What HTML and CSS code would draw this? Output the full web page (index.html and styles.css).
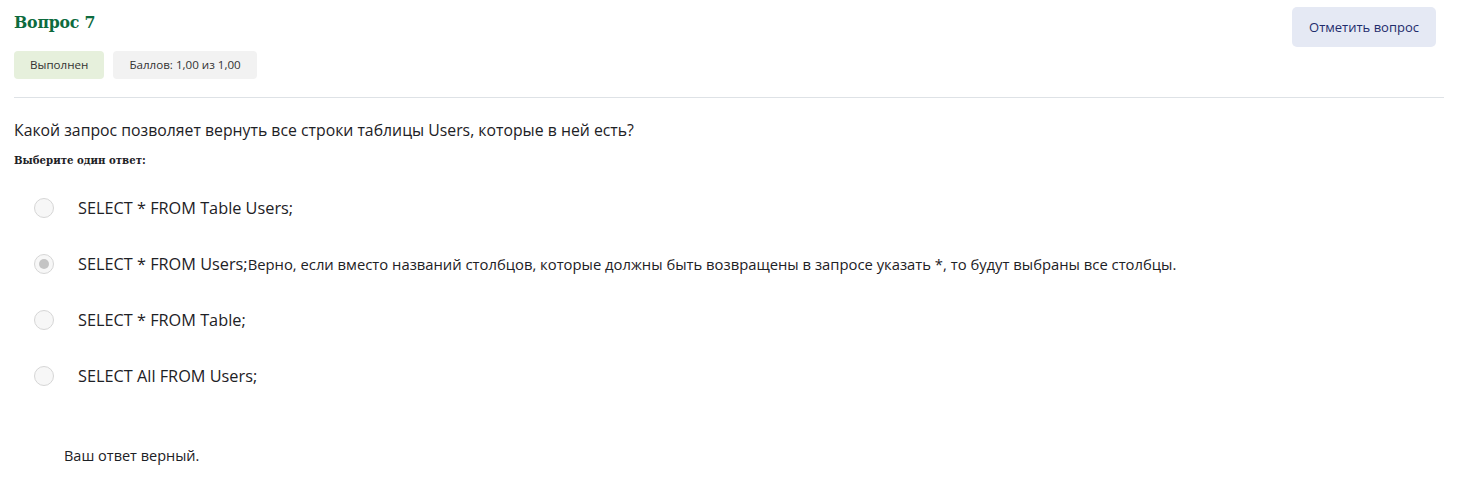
FILE: index.html
```html
<!DOCTYPE html>
<html lang="ru">
<head>
<meta charset="utf-8">
<link rel="stylesheet" href="styles.css">
</head>
<body>
<div class="que">
  <div class="info">
    <div class="info-left">
      <h3 class="qno">Вопрос 7</h3>
      <div class="badges">
        <span class="badge badge-done">Выполнен</span>
        <span class="badge badge-grade">Баллов: 1,00 из 1,00</span>
      </div>
    </div>
    <button class="flag">Отметить вопрос</button>
  </div>
  <div class="content">
    <div class="qtext">Какой запрос позволяет вернуть все строки таблицы Users, которые в ней есть?</div>
    <div class="prompt">Выберите один ответ:</div>
    <div class="answers">
      <div class="answer"><span class="radio"></span><span class="label">SELECT * FROM Table Users;</span></div>
      <div class="answer"><span class="radio checked"></span><span class="label">SELECT * FROM Users;<span class="fb">Верно, если вместо названий столбцов, которые должны быть возвращены в запросе указать *, то будут выбраны все столбцы.</span></span></div>
      <div class="answer"><span class="radio"></span><span class="label">SELECT * FROM Table;</span></div>
      <div class="answer"><span class="radio"></span><span class="label">SELECT All FROM Users;</span></div>
    </div>
    <div class="outcome">Ваш ответ верный.</div>
  </div>
</div>
</body>
</html>
```
FILE: styles.css
```css
* { box-sizing: border-box; }
html, body { margin: 0; padding: 0; background: #fff; }
body { font-family: "Open Sans", "Noto Sans", sans-serif; color: #1d2125; }

.que { padding: 0 14px 0 14px; width: 1458px; }

.info {
  display: flex;
  justify-content: space-between;
  align-items: flex-start;
  border-bottom: 1px solid #dee2e6;
  padding-bottom: 18px;
}
.qno {
  margin: 10px 0 0 0;
  font-family: "DejaVu Serif Condensed", "DejaVu Serif", serif;
  font-stretch: condensed;
  font-weight: bold;
  font-size: 17.5px;
  line-height: 24px;
  color: #0d6b3e;
  letter-spacing: -0.2px;
}
.badges { display: flex; gap: 9px; margin-top: 17px; }
.badge {
  display: inline-block;
  height: 28px;
  line-height: 28px;
  padding: 0 16px;
  border-radius: 4px;
  font-size: 11.6px;
  color: #333;
  font-family: "Open Sans", sans-serif;
}
.badge-done { background: #e6f0dc; }
.badge-grade { background: #f2f2f2; }

.flag {
  margin-top: 7px;
  margin-right: 8px;
  width: 144px;
  height: 40px;
  border: none;
  border-radius: 5px;
  background: #e5e9f4;
  color: #1f2c6c;
  font-family: "Open Sans", sans-serif;
  font-size: 13px;
  padding: 0;
}

.content { padding-top: 20px; }
.qtext { font-size: 15.8px; line-height: 24px; color: #1d2125; }
.prompt {
  font-family: "DejaVu Serif Condensed", "DejaVu Serif", serif;
  font-stretch: condensed;
  font-weight: bold;
  font-size: 11.3px;
  margin-top: 10px;
  line-height: 16px;
  color: #1d2125;
}
.answers { margin-top: 28px; display: flex; flex-direction: column; gap: 32px; }
.answer { display: flex; align-items: center; height: 24px; padding-left: 20px; }
.radio {
  width: 20px; height: 20px;
  border-radius: 50%;
  border: 1px solid #d6d6d6;
  background: #f7f7f7;
  flex: none;
  position: relative;
}
.radio.checked::after {
  content: "";
  position: absolute;
  left: 4px; top: 4px;
  width: 10px; height: 10px;
  border-radius: 50%;
  background: #c4c4c4;
}
.label { margin-left: 24px; font-size: 16.3px; color: #1d2125; }
.fb { font-size: 14.8px; }
.outcome { margin-top: 58px; padding-left: 50px; font-size: 14.5px; color: #1d2125; }
```
